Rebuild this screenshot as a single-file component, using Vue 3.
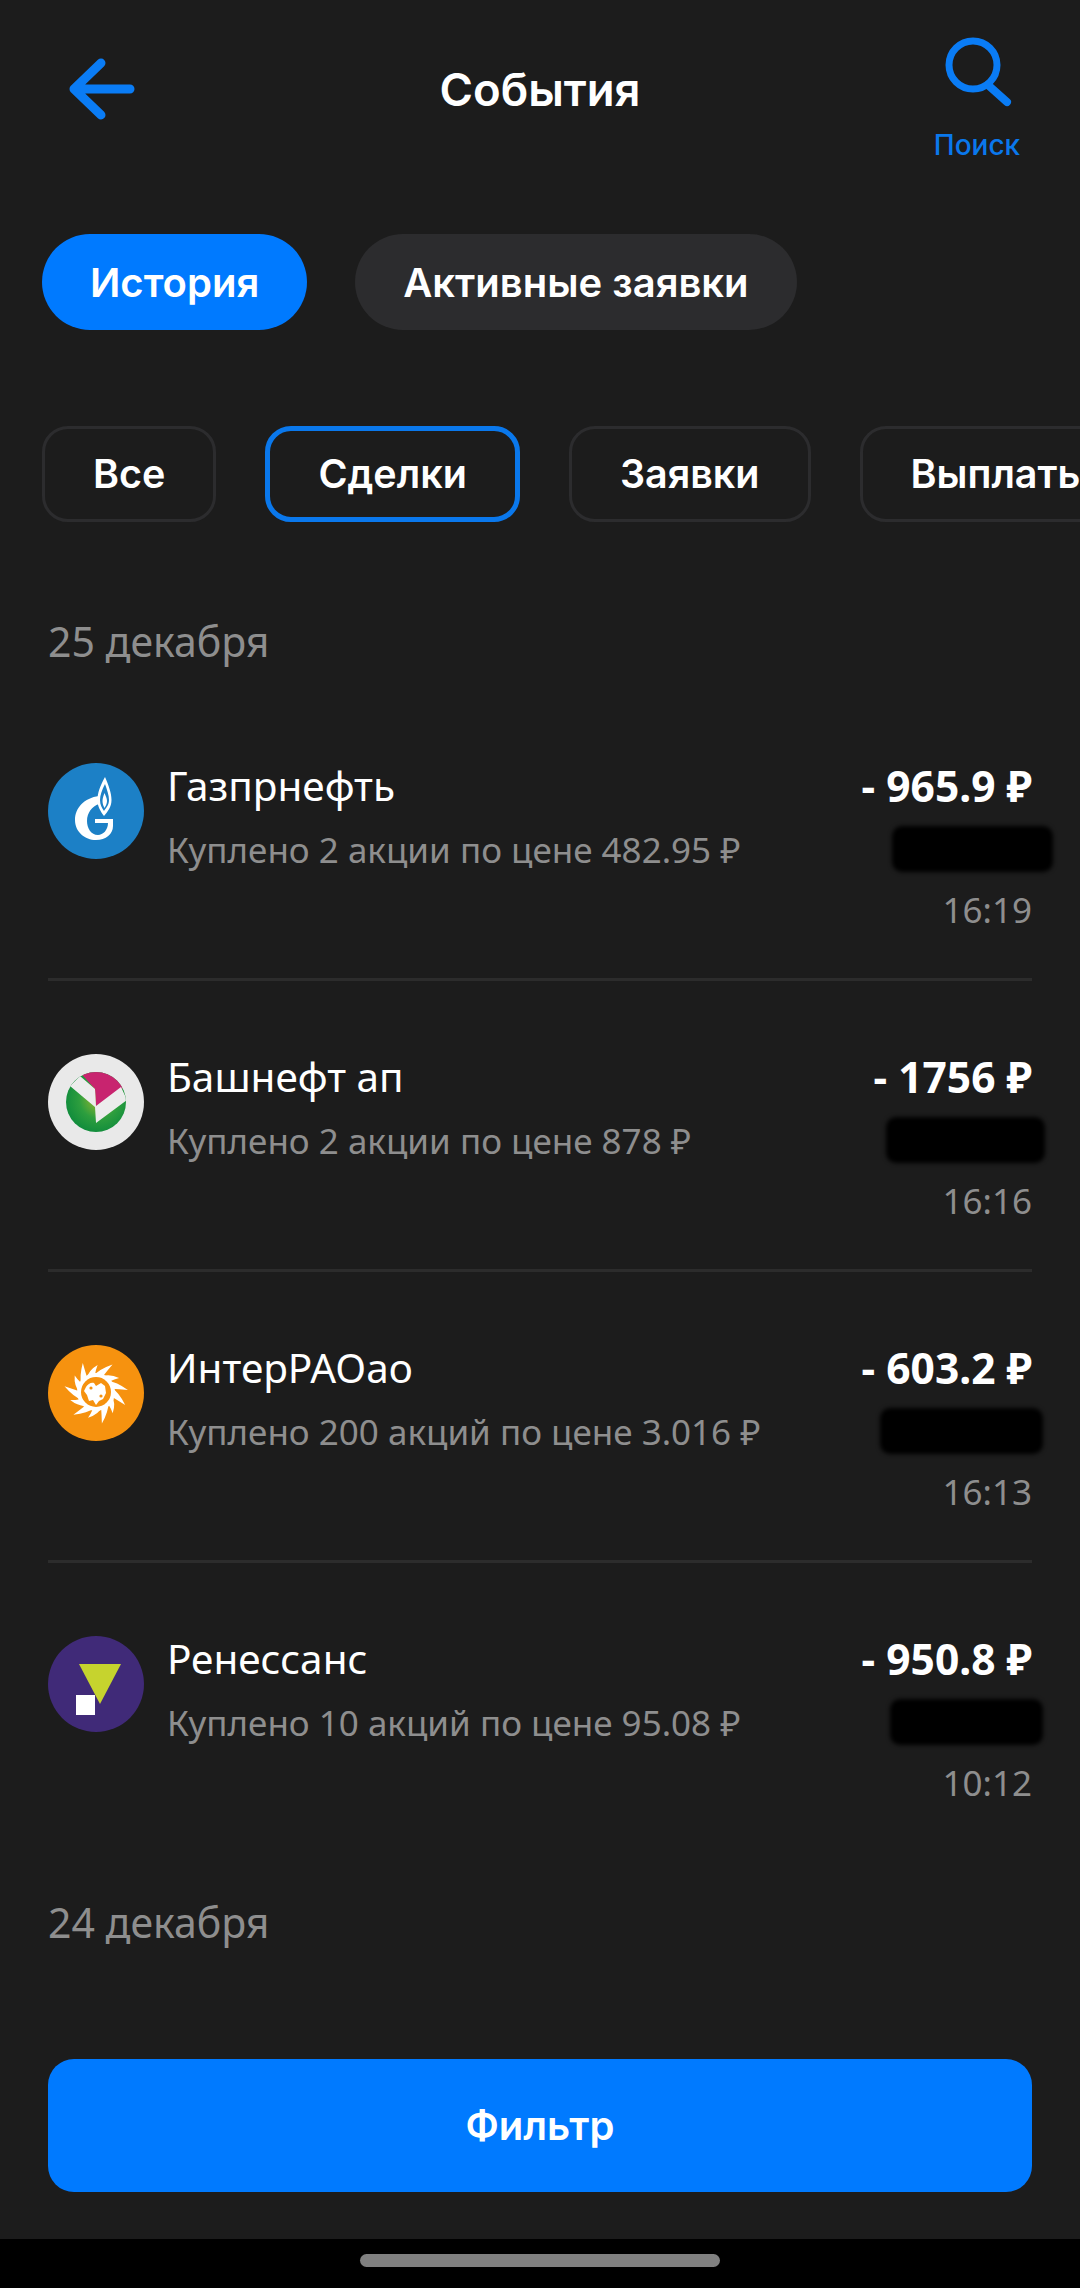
<script setup>
const chips = [
  { label: 'Все' },
  { label: 'Сделки', active: true },
  { label: 'Заявки' },
  { label: 'Выплаты' }
]
const rows = [
  { id: 'gaz', name: 'Газпрнефть', detail: 'Куплено 2 акции по цене 482.95 ₽', amount: '- 965.9 ₽', time: '16:19', mask: 161, shift: -21 },
  { id: 'bash', name: 'Башнефт ап', detail: 'Куплено 2 акции по цене 878 ₽', amount: '- 1756 ₽', time: '16:16', mask: 159, shift: -13 },
  { id: 'rao', name: 'ИнтерРАОао', detail: 'Куплено 200 акций по цене 3.016 ₽', amount: '- 603.2 ₽', time: '16:13', mask: 163, shift: -11 },
  { id: 'ren', name: 'Ренессанс', detail: 'Куплено 10 акций по цене 95.08 ₽', amount: '- 950.8 ₽', time: '10:12', mask: 153, shift: -11 }
]
const rays = Array.from({ length: 13 }, (_, i) => {
  const a = (i / 13) * Math.PI * 2
  const len = i % 2 ? 27 : 32
  const pt = (r, t) => `${(48 + r * Math.cos(t)).toFixed(1)} ${(47 + r * Math.sin(t)).toFixed(1)}`
  return `M${pt(16, a - 0.3)} Q${pt(23, a + 0.02)} ${pt(len, a + 0.42)} Q${pt(23, a + 0.36)} ${pt(16, a + 0.28)} Z`
})
</script>

<template>
  <div class="page">
    <header class="top">
      <svg class="back" viewBox="0 0 72 64" fill="none" stroke="#0a7cf5" stroke-width="9" stroke-linecap="round" stroke-linejoin="round">
        <path d="M35 6 8 32l27 26M8 32h56" />
      </svg>
      <h1 class="title">События</h1>
      <div class="search">
        <svg viewBox="0 0 72 72" fill="none" stroke="#0a7cf5" stroke-width="7" stroke-linecap="round">
          <circle cx="32" cy="29" r="24" />
          <path d="M47 49 66 66" stroke-width="8" />
        </svg>
        <span>Поиск</span>
      </div>
    </header>

    <nav class="tabs">
      <span class="tab on">История</span>
      <span class="tab">Активные заявки</span>
    </nav>

    <div class="chips">
      <span v-for="c in chips" :key="c.label" class="chip" :class="{ on: c.active }">{{ c.label }}</span>
    </div>

    <div class="date first">25 декабря</div>

    <section class="list">
      <article v-for="r in rows" :key="r.id" class="row">
        <svg v-if="r.id === 'gaz'" class="logo" viewBox="0 0 96 96">
          <circle cx="48" cy="48" r="48" fill="#1c80c6" />
          <path fill="#fff" d="M57 14C52 23 49.500 30 49.500 37c0 7 3 11 6.500 16 4-5 7.500-9 7.500-16 0-7-3-15-6.500-23Z" />
          <path fill="#1c80c6" d="M57 21c-3 6-5 11-5 16 0 5 2 8 4 11 2-3 5-6 5-11 0-5-2-10-4-16Z" />
          <path fill="#fff" d="M56.500 30c-1 3-2 5-2 8s1 5 2 7c1-2 2.500-4 2.500-7s-1.500-5-2.500-8Z" />
          <path fill="#fff" d="M51 33C36 35 27 45 27 57c0 12 10 20 21 20 10 0 17-6 17-14v-7H47v4h13c0 7-5 12-10 12-7 0-11-7-11-14 0-8 5-15 12-17Z" />
        </svg>
        <svg v-else-if="r.id === 'bash'" class="logo" viewBox="0 0 96 96">
          <defs>
            <clipPath id="bashClip"><circle cx="48" cy="48" r="30" /></clipPath>
            <radialGradient id="bashGreen" cx=".55" cy=".45" r=".6">
              <stop offset="0" stop-color="#a0b92e" />
              <stop offset=".55" stop-color="#2d9e3e" />
              <stop offset="1" stop-color="#0d8a3c" />
            </radialGradient>
          </defs>
          <circle cx="48" cy="48" r="48" fill="#e9e9e9" />
          <g clip-path="url(#bashClip)">
            <rect x="18" y="18" width="60" height="60" fill="url(#bashGreen)" />
            <path fill="#c8246f" d="M28 14h50v18L48 52 47 35Z" />
            <path fill="#ececec" d="M32 22 47 35l1 17 25-19 6 13-31 23-1-16-25-21Z" />
          </g>
        </svg>
        <svg v-else-if="r.id === 'rao'" class="logo" viewBox="0 0 96 96">
          <circle cx="48" cy="48" r="48" fill="#f6920f" />
          <path v-for="(d, i) in rays" :key="i" :d="d" fill="#fff" />
          <circle cx="48" cy="47" r="19" fill="#fff" />
          <circle cx="48" cy="47" r="15" fill="#f6920f" />
          <path fill="#fff" d="M38 42c2-3 5-5 8-4l2 3 5-3 4 3 1 7-3 6-4 2-3 4-3-5-4 1-2-6-3-4Z" />
          <circle cx="43" cy="43" r="1.600" fill="#f6920f" />
          <circle cx="53" cy="51" r="1.600" fill="#f6920f" />
        </svg>
        <svg v-else class="logo" viewBox="0 0 96 96">
          <circle cx="48" cy="48" r="48" fill="#402a78" />
          <path fill="#c6d32e" d="M31 28h42L52 68Z" />
          <rect x="28" y="59" width="19" height="20" fill="#fff" />
        </svg>

        <div class="info">
          <div class="name">{{ r.name }}</div>
          <div class="detail">{{ r.detail }}</div>
        </div>

        <div class="side">
          <div class="amount">{{ r.amount }}</div>
          <div class="mask" :style="{ width: r.mask + 'px', marginRight: r.shift + 'px' }"></div>
          <div class="time">{{ r.time }}</div>
        </div>
      </article>
    </section>

    <div class="date second">24 декабря</div>

    <div class="grow"></div>

    <div class="action">Фильтр</div>
    <footer class="navbar"><i></i></footer>
  </div>
</template>

<style>
html, body { margin: 0; background: #1c1c1c; }
</style>

<style scoped>
.page {
  width: 1080px;
  height: 2288px;
  overflow: hidden;
  display: flex;
  flex-direction: column;
  background: #1c1c1c;
  color: #fff;
  font-family: "Inter", "Noto Sans", sans-serif;
}
.top {
  height: 234px;
  box-sizing: border-box;
  display: grid;
  grid-template-columns: 1fr auto 1fr;
  align-items: start;
}
.back {
  width: 72px;
  height: 64px;
  margin: 57px 0 0 66px;
}
.title {
  margin: 64px 0 0;
  font-size: 45.500px;
  line-height: 52px;
  font-weight: 600;
}
.search {
  justify-self: end;
  width: 126px;
  margin: 36px 40px 0 0;
  display: flex;
  flex-direction: column;
  align-items: center;
  color: #0a78ec;
  font-size: 28px;
  line-height: 36px;
  font-weight: 500;
}
.search svg {
  width: 72px;
  height: 72px;
  margin-bottom: 19px;
}
.tabs {
  display: flex;
  gap: 48px;
  padding-left: 42px;
}
.tab {
  height: 96px;
  padding: 0 48px;
  display: flex;
  align-items: center;
  border-radius: 48px;
  background: #2c2c2e;
  font-size: 40px;
  font-weight: 600;
}
.tab.on { background: #007aff; }
.chips {
  margin-top: 96px;
  display: flex;
  gap: 49px;
  padding-left: 42px;
  white-space: nowrap;
}
.chip {
  flex: none;
  height: 96px;
  box-sizing: border-box;
  padding: 0 48px;
  display: flex;
  align-items: center;
  border: 3px solid #2c2c2e;
  border-radius: 26px;
  font-size: 39.500px;
  font-weight: 600;
}
.chip.on {
  padding: 0 48px;
  border: 5px solid #0a78ec;
}
.date {
  padding-left: 48px;
  height: 60px;
  line-height: 60px;
  color: #8e8e8e;
  font-family: "Noto Sans", sans-serif;
  font-size: 41px;
}
.date.first { margin-top: 89px; }
.date.second { margin-top: 38px; }
.list {
  margin: 19px 48px 0;
}
.row {
  height: 291px;
  box-sizing: border-box;
  padding-top: 73px;
  display: flex;
  align-items: flex-start;
  border-bottom: 3px solid #2c2c2c;
}
.row:last-child { border-bottom: 0; }
.logo {
  flex: none;
  width: 96px;
  height: 96px;
  margin-right: 23px;
}
.info {
  flex: 1;
  min-width: 0;
}
.name {
  margin-top: -1px;
  font-family: "Noto Sans", sans-serif;
  font-size: 40.500px;
  line-height: 48px;
}
.detail {
  margin-top: 16px;
  color: #8e8e8e;
  font-family: "Noto Sans", sans-serif;
  font-size: 35px;
  line-height: 48px;
}
.side {
  display: flex;
  flex-direction: column;
  align-items: flex-end;
}
.amount {
  margin-top: -1px;
  font-family: "Noto Sans", sans-serif;
  font-size: 42.500px;
  line-height: 48px;
  font-weight: 700;
}
.mask {
  height: 46px;
  margin-top: 16px;
  background: #000;
  border-radius: 10px;
  filter: blur(2px);
}
.time {
  margin-top: 13px;
  color: #8e8e8e;
  font-family: "Noto Sans", sans-serif;
  font-size: 35px;
  line-height: 50px;
}
.grow { flex: 1; }
.action {
  height: 133px;
  margin: 0 48px 47px;
  display: flex;
  align-items: center;
  justify-content: center;
  border-radius: 26px;
  background: #007aff;
  font-size: 40px;
  font-weight: 600;
}
.navbar {
  height: 49px;
  box-sizing: border-box;
  padding-top: 15px;
  display: flex;
  justify-content: center;
  background: #000;
}
.navbar i {
  display: block;
  width: 360px;
  height: 13px;
  border-radius: 7px;
  background: #808080;
}
</style>
